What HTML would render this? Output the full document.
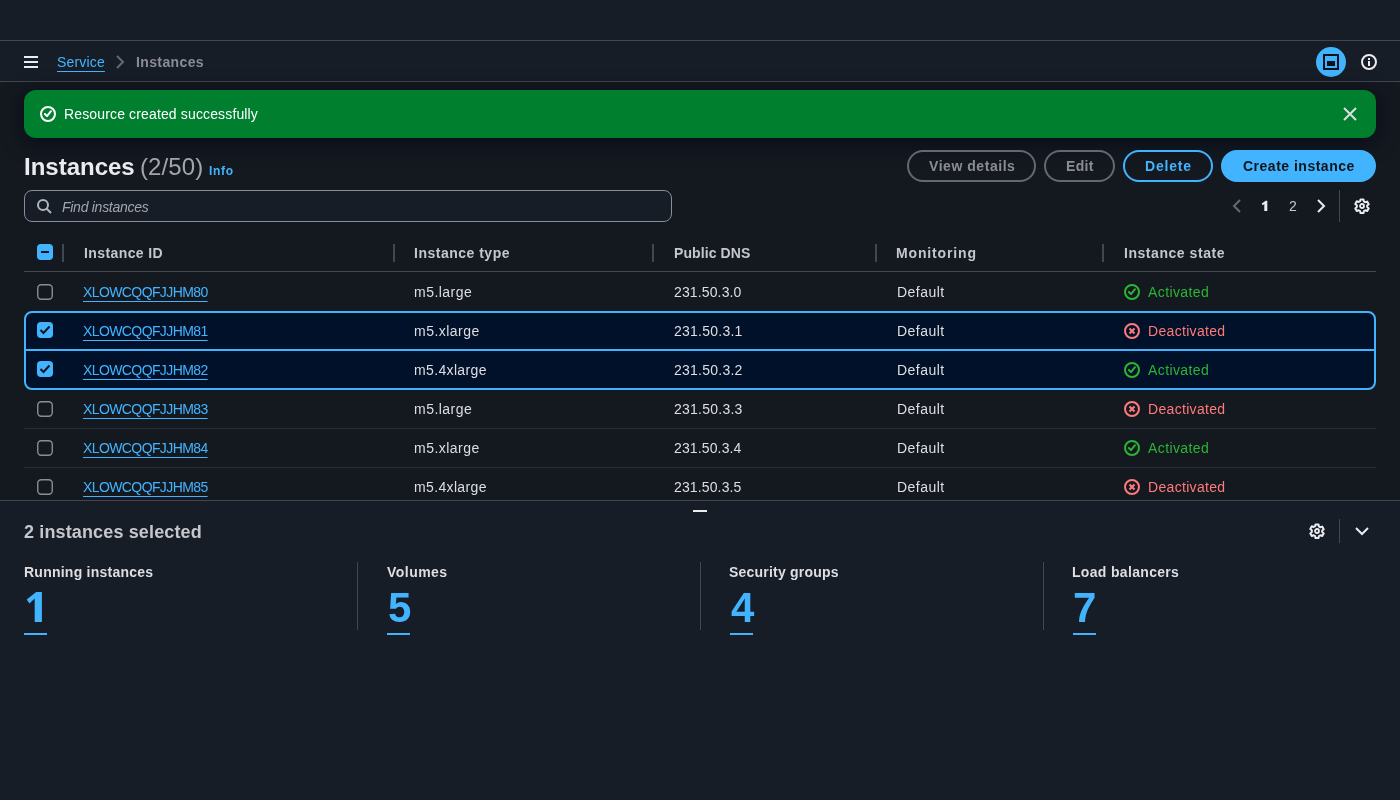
<!DOCTYPE html><html><head><meta charset="utf-8"><style>
html,body{margin:0;padding:0;}
body{width:1400px;height:800px;overflow:hidden;background:#161d26;position:relative;font-family:"Liberation Sans",sans-serif;}
.t{position:absolute;white-space:nowrap;will-change:transform;}
.a{position:absolute;}
.cb{position:absolute;width:12px;height:12px;border:2px solid #8c8c94;border-radius:4px;background:#0f141a;}
.cbc{position:absolute;width:16px;height:16px;border-radius:4px;background:#42b4ff;}
</style></head><body>

<div class="a" style="left:0;top:82px;width:1400px;height:418px;background:#141920"></div>
<div class="a" style="left:0;top:40px;width:1400px;height:1px;background:#424650"></div>
<div class="a" style="left:0;top:81px;width:1400px;height:1px;background:#424650"></div>
<div class="a" style="left:24px;top:56px;width:14px;height:2px;background:#ebebf0"></div>
<div class="a" style="left:24px;top:61px;width:14px;height:2px;background:#ebebf0"></div>
<div class="a" style="left:24px;top:66px;width:14px;height:2px;background:#ebebf0"></div>
<svg class="a" style="left:114px;top:54px" width="12" height="16" viewBox="0 0 12 16"><polyline points="3,2 9,8 3,14" fill="none" stroke="#656871" stroke-width="2"/></svg>
<div class="a" style="left:1316px;top:47px;width:30px;height:30px;border-radius:50%;background:#42b4ff"></div>
<div class="a" style="left:1323px;top:54px;width:12px;height:12px;border:2px solid #0f141a"></div>
<div class="a" style="left:1327px;top:61px;width:8px;height:5px;background:#0f141a"></div>
<svg class="a" style="left:1361px;top:54px" width="16" height="16" viewBox="0 0 16 16"><circle cx="8" cy="8" r="7" fill="none" stroke="#ebebf0" stroke-width="2"/><rect x="7" y="4" width="2" height="2" fill="#ebebf0"/><rect x="7" y="7" width="2" height="5" fill="#ebebf0"/></svg>
<div class="a" style="left:24px;top:90px;width:1352px;height:48px;border-radius:12px;background:#00802f;box-shadow:0 4px 20px 1px rgba(0,7,22,0.7)"></div>
<div class="a" style="left:40px;top:106px"><svg width="16" height="16" viewBox="0 0 16 16"><circle cx="8" cy="8" r="7" fill="none" stroke="#ffffff" stroke-width="2"/><polyline points="4.9,8 7,10.1 11,5.2" fill="none" stroke="#ffffff" stroke-width="2" stroke-linejoin="round" stroke-linecap="round"/></svg></div>
<svg class="a" style="left:1342px;top:106px" width="16" height="16" viewBox="0 0 16 16"><path d="M2 2L14 14M14 2L2 14" stroke="#dedee3" stroke-width="2"/></svg>
<div class="a" style="left:24px;top:190px;width:646px;height:30px;border:1px solid #8c8c94;border-radius:8px;background:#161d26"></div>
<svg class="a" style="left:36px;top:198px" width="16" height="16" viewBox="0 0 16 16"><circle cx="7" cy="7" r="5" fill="none" stroke="#b4b4bb" stroke-width="2"/><path d="M10.5 10.5L15 15" stroke="#b4b4bb" stroke-width="2"/></svg>
<div class="a" style="left:907px;top:150px;width:125px;height:28px;border:2px solid #656871;border-radius:16px;background:transparent"></div>
<div class="a" style="left:1044px;top:150px;width:67px;height:28px;border:2px solid #656871;border-radius:16px;background:transparent"></div>
<div class="a" style="left:1123px;top:150px;width:86px;height:28px;border:2px solid #42b4ff;border-radius:16px;background:transparent"></div>
<div class="a" style="left:1221px;top:150px;width:151px;height:28px;border:2px solid #42b4ff;border-radius:16px;background:#42b4ff"></div>
<svg class="a" style="left:1260px;top:199px" width="10" height="14" viewBox="0 0 10 14"><polygon points="1.6,4.8 5.6,1.8 7.3,1.8 7.3,12.1 4.3,12.1 4.3,5.0 2.8,6.2" fill="#ebebf0"/></svg>
<svg class="a" style="left:1229px;top:198px" width="16" height="16" viewBox="0 0 16 16"><polyline points="11,2 5,8 11,14" fill="none" stroke="#656871" stroke-width="2"/></svg>
<svg class="a" style="left:1313px;top:198px" width="16" height="16" viewBox="0 0 16 16"><polyline points="5,2 11,8 5,14" fill="none" stroke="#ebebf0" stroke-width="2"/></svg>
<div class="a" style="left:1339px;top:190px;width:1px;height:32px;background:#424650"></div>
<div class="a" style="left:1354px;top:198px"><svg width="16" height="16" viewBox="0 0 16 16"><path d="M6.5 1.5h3l.4 2 1.4.8 1.9-.7 1.5 2.6-1.5 1.3v1.6l1.5 1.3-1.5 2.6-1.9-.7-1.4.8-.4 2h-3l-.4-2-1.4-.8-1.9.7-1.5-2.6 1.5-1.3V7.2L1.3 5.9l1.5-2.6 1.9.7 1.4-.8z" fill="none" stroke="#ebebf0" stroke-width="2" stroke-linejoin="round"/><circle cx="8" cy="8" r="2" fill="none" stroke="#ebebf0" stroke-width="1.8"/></svg></div>
<div class="cbc" style="left:37px;top:244px"></div><div class="a" style="left:41px;top:251px;width:8px;height:2px;background:#0f141a"></div>
<div class="a" style="left:62px;top:244px;width:2px;height:18px;background:#424650"></div>
<div class="a" style="left:393px;top:244px;width:2px;height:18px;background:#424650"></div>
<div class="a" style="left:652px;top:244px;width:2px;height:18px;background:#424650"></div>
<div class="a" style="left:875px;top:244px;width:2px;height:18px;background:#424650"></div>
<div class="a" style="left:1102px;top:244px;width:2px;height:18px;background:#424650"></div>
<div class="a" style="left:24px;top:271px;width:1352px;height:1px;background:#424650"></div>
<div class="a" style="left:24px;top:428px;width:1352px;height:1px;background:#2a2e3a"></div>
<div class="a" style="left:24px;top:467px;width:1352px;height:1px;background:#2a2e3a"></div>
<div class="a" style="left:24px;top:311px;width:1348px;height:75px;border:2px solid #42b4ff;border-radius:8px;background:#001129"></div>
<div class="a" style="left:24px;top:349px;width:1352px;height:2px;background:#42b4ff"></div>
<svg class="a" style="left:37px;top:284px" width="16" height="16" viewBox="0 0 16 16"><rect x="0.75" y="0.75" width="14.5" height="14.5" rx="3.5" fill="#141920" stroke="#8c8c94" stroke-width="1.4"/></svg>
<div class="a" style="left:1124px;top:284px"><svg width="16" height="16" viewBox="0 0 16 16"><circle cx="8" cy="8" r="7" fill="none" stroke="#2bb534" stroke-width="2"/><polyline points="4.9,8 7,10.1 11,5.2" fill="none" stroke="#2bb534" stroke-width="2" stroke-linejoin="round" stroke-linecap="round"/></svg></div>
<div class="cbc" style="left:37px;top:322px"><svg width="16" height="16" viewBox="0 0 16 16"><polyline points="3.5,8 6.5,11 12.5,4.5" fill="none" stroke="#0f141a" stroke-width="2"/></svg></div>
<div class="a" style="left:1124px;top:323px"><svg width="16" height="16" viewBox="0 0 16 16"><circle cx="8" cy="8" r="7" fill="none" stroke="#ff7a7a" stroke-width="2"/><path d="M5.5 5.5 L10.5 10.5 M10.5 5.5 L5.5 10.5" fill="none" stroke="#ff7a7a" stroke-width="2.1" stroke-linecap="butt"/></svg></div>
<div class="cbc" style="left:37px;top:361px"><svg width="16" height="16" viewBox="0 0 16 16"><polyline points="3.5,8 6.5,11 12.5,4.5" fill="none" stroke="#0f141a" stroke-width="2"/></svg></div>
<div class="a" style="left:1124px;top:362px"><svg width="16" height="16" viewBox="0 0 16 16"><circle cx="8" cy="8" r="7" fill="none" stroke="#2bb534" stroke-width="2"/><polyline points="4.9,8 7,10.1 11,5.2" fill="none" stroke="#2bb534" stroke-width="2" stroke-linejoin="round" stroke-linecap="round"/></svg></div>
<svg class="a" style="left:37px;top:401px" width="16" height="16" viewBox="0 0 16 16"><rect x="0.75" y="0.75" width="14.5" height="14.5" rx="3.5" fill="#141920" stroke="#8c8c94" stroke-width="1.4"/></svg>
<div class="a" style="left:1124px;top:401px"><svg width="16" height="16" viewBox="0 0 16 16"><circle cx="8" cy="8" r="7" fill="none" stroke="#ff7a7a" stroke-width="2"/><path d="M5.5 5.5 L10.5 10.5 M10.5 5.5 L5.5 10.5" fill="none" stroke="#ff7a7a" stroke-width="2.1" stroke-linecap="butt"/></svg></div>
<svg class="a" style="left:37px;top:440px" width="16" height="16" viewBox="0 0 16 16"><rect x="0.75" y="0.75" width="14.5" height="14.5" rx="3.5" fill="#141920" stroke="#8c8c94" stroke-width="1.4"/></svg>
<div class="a" style="left:1124px;top:440px"><svg width="16" height="16" viewBox="0 0 16 16"><circle cx="8" cy="8" r="7" fill="none" stroke="#2bb534" stroke-width="2"/><polyline points="4.9,8 7,10.1 11,5.2" fill="none" stroke="#2bb534" stroke-width="2" stroke-linejoin="round" stroke-linecap="round"/></svg></div>
<svg class="a" style="left:37px;top:479px" width="16" height="16" viewBox="0 0 16 16"><rect x="0.75" y="0.75" width="14.5" height="14.5" rx="3.5" fill="#141920" stroke="#8c8c94" stroke-width="1.4"/></svg>
<div class="a" style="left:1124px;top:479px"><svg width="16" height="16" viewBox="0 0 16 16"><circle cx="8" cy="8" r="7" fill="none" stroke="#ff7a7a" stroke-width="2"/><path d="M5.5 5.5 L10.5 10.5 M10.5 5.5 L5.5 10.5" fill="none" stroke="#ff7a7a" stroke-width="2.1" stroke-linecap="butt"/></svg></div>
<div id="bc1" class="t" style="left:57px;top:52px;font-size:14px;line-height:20px;font-weight:400;font-style:normal;color:#42b4ff;letter-spacing:0.167px;text-decoration:underline;text-underline-offset:4px;">Service</div>
<div id="bc2" class="t" style="left:136px;top:52px;font-size:14px;line-height:20px;font-weight:700;font-style:normal;color:#8c8c94;letter-spacing:0.375px;">Instances</div>
<div id="fl" class="t" style="left:64px;top:104px;font-size:14px;line-height:20px;font-weight:400;font-style:normal;color:#ffffff;letter-spacing:0.143px;">Resource created successfully</div>
<div id="h1" class="t" style="left:24px;top:152px;font-size:24px;line-height:30px;font-weight:700;font-style:normal;color:#ebebf0;letter-spacing:0.000px;">Instances</div>
<div id="h1c" class="t" style="left:140px;top:152px;font-size:24px;line-height:30px;font-weight:400;font-style:normal;color:#a4a4ad;letter-spacing:0.100px;">(2/50)</div>
<div id="info" class="t" style="left:209px;top:163px;font-size:12px;line-height:16px;font-weight:700;font-style:normal;color:#42b4ff;letter-spacing:0.667px;">Info</div>
<div id="ph" class="t" style="left:62px;top:197px;font-size:14px;line-height:20px;font-weight:400;font-style:italic;color:#a4a4ad;letter-spacing:-0.269px;">Find instances</div>
<div id="b1" class="t" style="left:929px;top:156px;font-size:14px;line-height:20px;font-weight:700;font-style:normal;color:#8c8c94;letter-spacing:0.545px;">View details</div>
<div id="b2" class="t" style="left:1066px;top:156px;font-size:14px;line-height:20px;font-weight:700;font-style:normal;color:#8c8c94;letter-spacing:0.333px;">Edit</div>
<div id="b3" class="t" style="left:1145px;top:156px;font-size:14px;line-height:20px;font-weight:700;font-style:normal;color:#42b4ff;letter-spacing:0.800px;">Delete</div>
<div id="b4" class="t" style="left:1243px;top:156px;font-size:14px;line-height:20px;font-weight:700;font-style:normal;color:#0f141a;letter-spacing:0.500px;">Create instance</div>
<div id="p2" class="t" style="left:1289px;top:196px;font-size:14px;line-height:20px;font-weight:400;font-style:normal;color:#c6c6cd;letter-spacing:0.000px;">2</div>
<div id="th1" class="t" style="left:84px;top:243px;font-size:14px;line-height:20px;font-weight:700;font-style:normal;color:#c6c6cd;letter-spacing:0.400px;">Instance ID</div>
<div id="th2" class="t" style="left:414px;top:243px;font-size:14px;line-height:20px;font-weight:700;font-style:normal;color:#c6c6cd;letter-spacing:0.500px;">Instance type</div>
<div id="th3" class="t" style="left:674px;top:243px;font-size:14px;line-height:20px;font-weight:700;font-style:normal;color:#c6c6cd;letter-spacing:0.089px;">Public DNS</div>
<div id="th4" class="t" style="left:896px;top:243px;font-size:14px;line-height:20px;font-weight:700;font-style:normal;color:#c6c6cd;letter-spacing:0.856px;">Monitoring</div>
<div id="th5" class="t" style="left:1124px;top:243px;font-size:14px;line-height:20px;font-weight:700;font-style:normal;color:#c6c6cd;letter-spacing:0.546px;">Instance state</div>
<div id="id0" class="t" style="left:83px;top:282px;font-size:14px;line-height:20px;font-weight:400;font-style:normal;color:#42b4ff;letter-spacing:-0.600px;text-decoration:underline;text-underline-offset:4px;">XLOWCQQFJJHM80</div>
<div id="ty0" class="t" style="left:414px;top:282px;font-size:14px;line-height:20px;font-weight:400;font-style:normal;color:#dedee3;letter-spacing:0.471px;">m5.large</div>
<div id="dn0" class="t" style="left:674px;top:282px;font-size:14px;line-height:20px;font-weight:400;font-style:normal;color:#dedee3;letter-spacing:0.133px;">231.50.3.0</div>
<div id="mo0" class="t" style="left:897px;top:282px;font-size:14px;line-height:20px;font-weight:400;font-style:normal;color:#dedee3;letter-spacing:0.467px;">Default</div>
<div id="st0" class="t" style="left:1148px;top:282px;font-size:14px;line-height:20px;font-weight:400;font-style:normal;color:#2bb534;letter-spacing:0.400px;">Activated</div>
<div id="id1" class="t" style="left:83px;top:321px;font-size:14px;line-height:20px;font-weight:400;font-style:normal;color:#42b4ff;letter-spacing:-0.600px;text-decoration:underline;text-underline-offset:4px;">XLOWCQQFJJHM81</div>
<div id="ty1" class="t" style="left:414px;top:321px;font-size:14px;line-height:20px;font-weight:400;font-style:normal;color:#dedee3;letter-spacing:0.475px;">m5.xlarge</div>
<div id="dn1" class="t" style="left:674px;top:321px;font-size:14px;line-height:20px;font-weight:400;font-style:normal;color:#dedee3;letter-spacing:0.244px;">231.50.3.1</div>
<div id="mo1" class="t" style="left:897px;top:321px;font-size:14px;line-height:20px;font-weight:400;font-style:normal;color:#dedee3;letter-spacing:0.467px;">Default</div>
<div id="st1" class="t" style="left:1148px;top:321px;font-size:14px;line-height:20px;font-weight:400;font-style:normal;color:#ff7a7a;letter-spacing:0.320px;">Deactivated</div>
<div id="id2" class="t" style="left:83px;top:360px;font-size:14px;line-height:20px;font-weight:400;font-style:normal;color:#42b4ff;letter-spacing:-0.600px;text-decoration:underline;text-underline-offset:4px;">XLOWCQQFJJHM82</div>
<div id="ty2" class="t" style="left:414px;top:360px;font-size:14px;line-height:20px;font-weight:400;font-style:normal;color:#dedee3;letter-spacing:0.356px;">m5.4xlarge</div>
<div id="dn2" class="t" style="left:674px;top:360px;font-size:14px;line-height:20px;font-weight:400;font-style:normal;color:#dedee3;letter-spacing:0.244px;">231.50.3.2</div>
<div id="mo2" class="t" style="left:897px;top:360px;font-size:14px;line-height:20px;font-weight:400;font-style:normal;color:#dedee3;letter-spacing:0.467px;">Default</div>
<div id="st2" class="t" style="left:1148px;top:360px;font-size:14px;line-height:20px;font-weight:400;font-style:normal;color:#2bb534;letter-spacing:0.400px;">Activated</div>
<div id="id3" class="t" style="left:83px;top:399px;font-size:14px;line-height:20px;font-weight:400;font-style:normal;color:#42b4ff;letter-spacing:-0.600px;text-decoration:underline;text-underline-offset:4px;">XLOWCQQFJJHM83</div>
<div id="ty3" class="t" style="left:414px;top:399px;font-size:14px;line-height:20px;font-weight:400;font-style:normal;color:#dedee3;letter-spacing:0.471px;">m5.large</div>
<div id="dn3" class="t" style="left:674px;top:399px;font-size:14px;line-height:20px;font-weight:400;font-style:normal;color:#dedee3;letter-spacing:0.244px;">231.50.3.3</div>
<div id="mo3" class="t" style="left:897px;top:399px;font-size:14px;line-height:20px;font-weight:400;font-style:normal;color:#dedee3;letter-spacing:0.467px;">Default</div>
<div id="st3" class="t" style="left:1148px;top:399px;font-size:14px;line-height:20px;font-weight:400;font-style:normal;color:#ff7a7a;letter-spacing:0.320px;">Deactivated</div>
<div id="id4" class="t" style="left:83px;top:438px;font-size:14px;line-height:20px;font-weight:400;font-style:normal;color:#42b4ff;letter-spacing:-0.600px;text-decoration:underline;text-underline-offset:4px;">XLOWCQQFJJHM84</div>
<div id="ty4" class="t" style="left:414px;top:438px;font-size:14px;line-height:20px;font-weight:400;font-style:normal;color:#dedee3;letter-spacing:0.475px;">m5.xlarge</div>
<div id="dn4" class="t" style="left:674px;top:438px;font-size:14px;line-height:20px;font-weight:400;font-style:normal;color:#dedee3;letter-spacing:0.133px;">231.50.3.4</div>
<div id="mo4" class="t" style="left:897px;top:438px;font-size:14px;line-height:20px;font-weight:400;font-style:normal;color:#dedee3;letter-spacing:0.467px;">Default</div>
<div id="st4" class="t" style="left:1148px;top:438px;font-size:14px;line-height:20px;font-weight:400;font-style:normal;color:#2bb534;letter-spacing:0.400px;">Activated</div>
<div id="id5" class="t" style="left:83px;top:477px;font-size:14px;line-height:20px;font-weight:400;font-style:normal;color:#42b4ff;letter-spacing:-0.600px;text-decoration:underline;text-underline-offset:4px;">XLOWCQQFJJHM85</div>
<div id="ty5" class="t" style="left:414px;top:477px;font-size:14px;line-height:20px;font-weight:400;font-style:normal;color:#dedee3;letter-spacing:0.356px;">m5.4xlarge</div>
<div id="dn5" class="t" style="left:674px;top:477px;font-size:14px;line-height:20px;font-weight:400;font-style:normal;color:#dedee3;letter-spacing:0.133px;">231.50.3.5</div>
<div id="mo5" class="t" style="left:897px;top:477px;font-size:14px;line-height:20px;font-weight:400;font-style:normal;color:#dedee3;letter-spacing:0.467px;">Default</div>
<div id="st5" class="t" style="left:1148px;top:477px;font-size:14px;line-height:20px;font-weight:400;font-style:normal;color:#ff7a7a;letter-spacing:0.320px;">Deactivated</div>
<div class="a" style="left:0;top:500px;width:1400px;height:300px;background:#161d26;border-top:1px solid #424650"></div>
<div class="a" style="left:693px;top:510px;width:14px;height:2px;background:#ebebf0"></div>
<div class="a" style="left:1309px;top:523px"><svg width="16" height="16" viewBox="0 0 16 16"><path d="M6.5 1.5h3l.4 2 1.4.8 1.9-.7 1.5 2.6-1.5 1.3v1.6l1.5 1.3-1.5 2.6-1.9-.7-1.4.8-.4 2h-3l-.4-2-1.4-.8-1.9.7-1.5-2.6 1.5-1.3V7.2L1.3 5.9l1.5-2.6 1.9.7 1.4-.8z" fill="none" stroke="#ebebf0" stroke-width="2" stroke-linejoin="round"/><circle cx="8" cy="8" r="2" fill="none" stroke="#ebebf0" stroke-width="1.8"/></svg></div>
<div class="a" style="left:1339px;top:519px;width:1px;height:24px;background:#424650"></div>
<svg class="a" style="left:1354px;top:523px" width="16" height="16" viewBox="0 0 16 16"><polyline points="2,5 8,11 14,5" fill="none" stroke="#ebebf0" stroke-width="2"/></svg>
<div class="a" style="left:357px;top:562px;width:1px;height:68px;background:#424650"></div>
<div class="a" style="left:700px;top:562px;width:1px;height:68px;background:#424650"></div>
<div class="a" style="left:1043px;top:562px;width:1px;height:68px;background:#424650"></div>
<div id="sp" class="t" style="left:24px;top:520px;font-size:18px;line-height:24px;font-weight:700;font-style:normal;color:#c6c6cd;letter-spacing:0.137px;">2 instances selected</div>
<div id="ml0" class="t" style="left:24px;top:562px;font-size:14px;line-height:20px;font-weight:700;font-style:normal;color:#dedee3;letter-spacing:0.237px;">Running instances</div>
<div id="ml1" class="t" style="left:387px;top:562px;font-size:14px;line-height:20px;font-weight:700;font-style:normal;color:#dedee3;letter-spacing:0.467px;">Volumes</div>
<div id="mn1" class="t" style="left:388px;top:584px;font-size:42px;line-height:48px;font-weight:700;font-style:normal;color:#42b4ff;letter-spacing:0.000px;">5</div>
<div id="ml2" class="t" style="left:729px;top:562px;font-size:14px;line-height:20px;font-weight:700;font-style:normal;color:#dedee3;letter-spacing:0.214px;">Security groups</div>
<div id="mn2" class="t" style="left:731px;top:584px;font-size:42px;line-height:48px;font-weight:700;font-style:normal;color:#42b4ff;letter-spacing:0.000px;">4</div>
<div id="ml3" class="t" style="left:1072px;top:562px;font-size:14px;line-height:20px;font-weight:700;font-style:normal;color:#dedee3;letter-spacing:0.323px;">Load balancers</div>
<div id="mn3" class="t" style="left:1073px;top:584px;font-size:42px;line-height:48px;font-weight:700;font-style:normal;color:#42b4ff;letter-spacing:0.000px;">7</div>
<svg class="a" style="left:24px;top:590px" width="20" height="34" viewBox="0 0 20 34"><polygon points="2.7,9.5 12.2,1.9 17.9,1.9 17.9,32 10.7,32 10.7,8.6 5.4,13.4" fill="#42b4ff"/></svg>
<div class="a" style="left:24px;top:633px;width:23px;height:2px;background:#42b4ff"></div>
<div class="a" style="left:387px;top:633px;width:23px;height:2px;background:#42b4ff"></div>
<div class="a" style="left:730px;top:633px;width:23px;height:2px;background:#42b4ff"></div>
<div class="a" style="left:1073px;top:633px;width:23px;height:2px;background:#42b4ff"></div>
</body></html>
